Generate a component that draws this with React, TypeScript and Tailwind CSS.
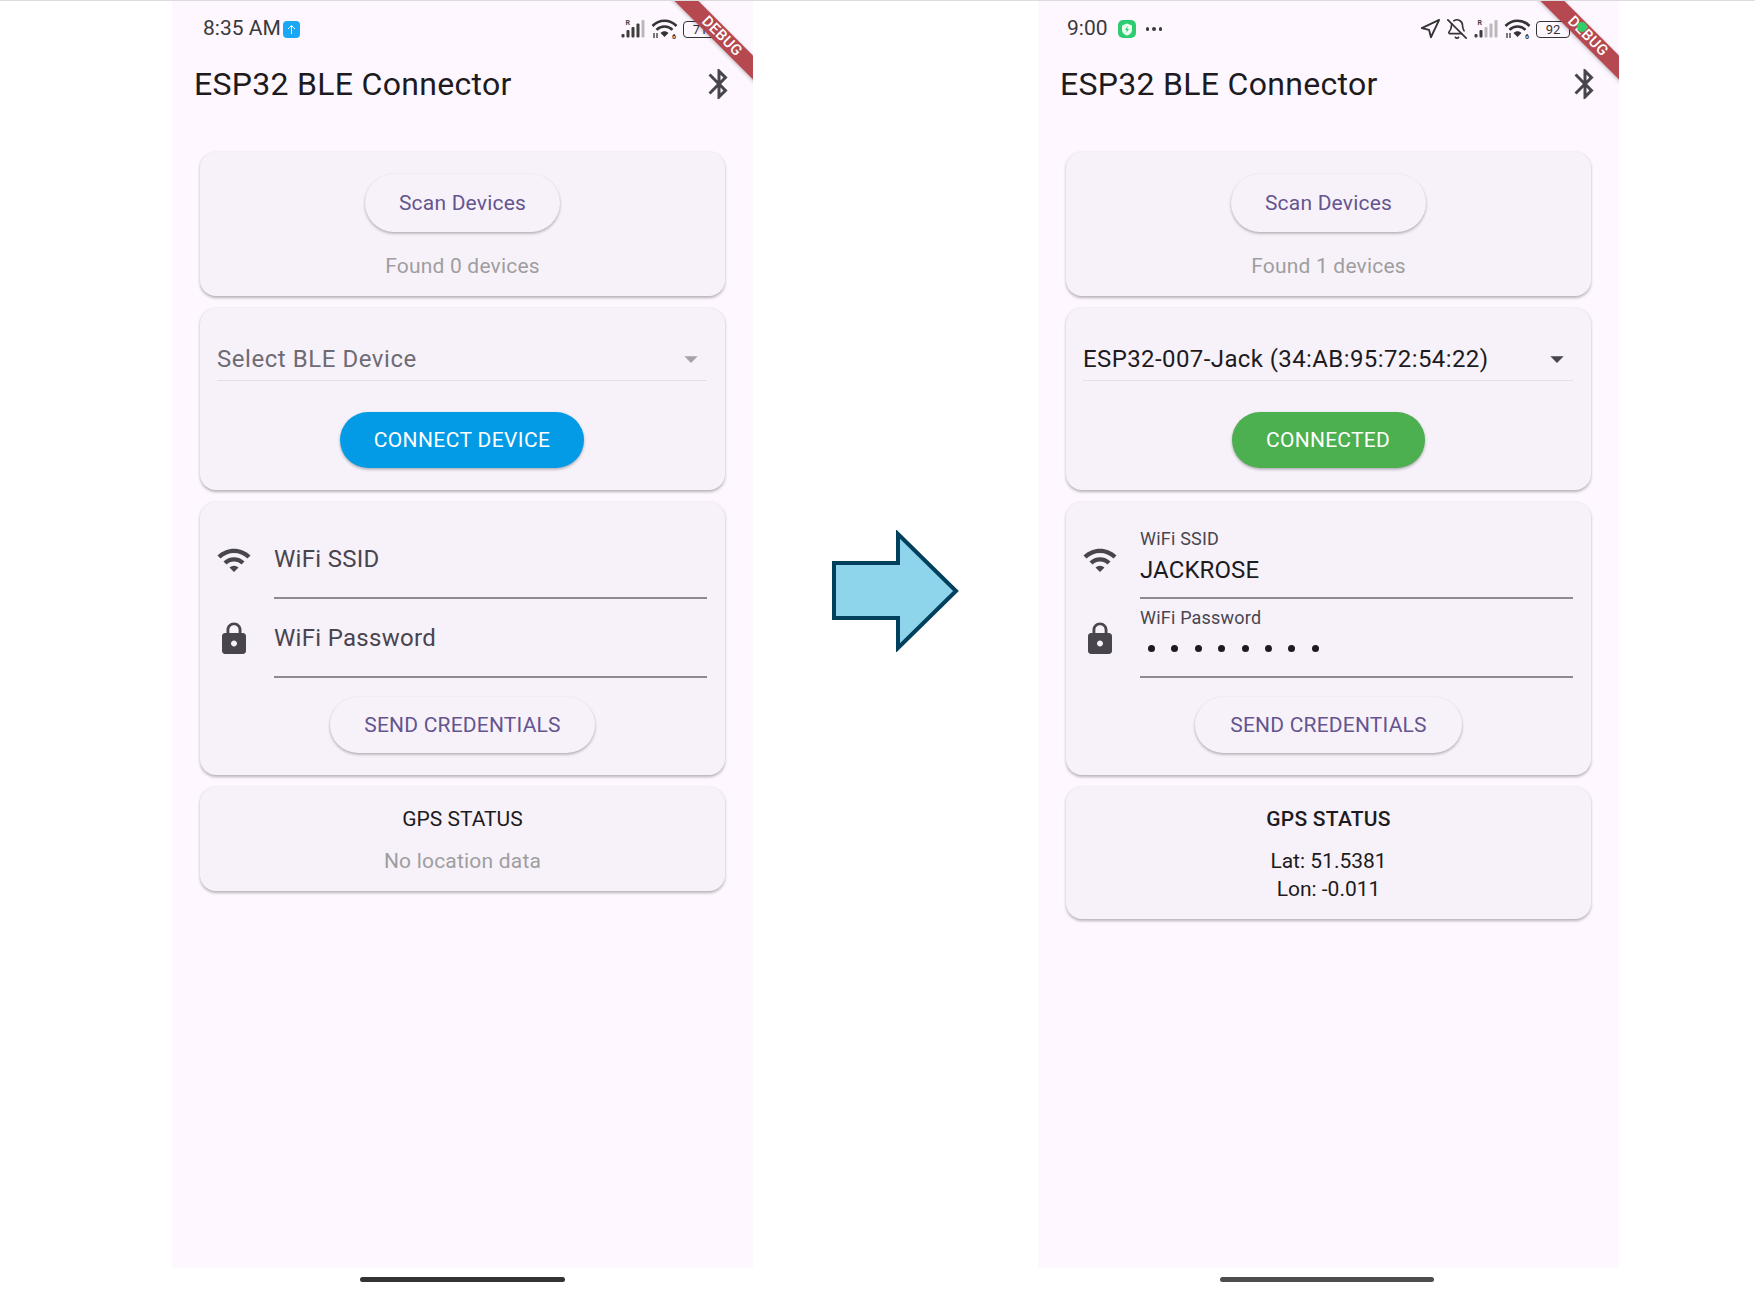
import { MdArrowDropDown, MdBluetooth, MdLock, MdWifi } from 'react-icons/md';
import { BellOff, Navigation } from 'lucide-react';

function Signal() {
  return (
    <svg width="26" height="22" viewBox="0 0 25 22">
      <text x="5" y="6.500" fontSize="7" fontWeight="700" fill="#444" fontFamily="Roboto, sans-serif">R</text>
      <rect x="1" y="16" width="3" height="3.500" rx="1" fill="#3d3d3d" />
      <rect x="6" y="12" width="3" height="7.500" rx="1" fill="#3d3d3d" />
      <rect x="11" y="9" width="3" height="10.500" rx="1" fill="#3d3d3d" />
      <rect x="16" y="5.500" width="3" height="14" rx="1" fill="#3d3d3d" />
      <rect x="21" y="2" width="3" height="17.500" rx="1" fill="#b9b9b9" />
    </svg>
  );
}

function SignalWeak() {
  return (
    <svg width="26" height="22" viewBox="0 0 25 22">
      <text x="4" y="6.500" fontSize="7" fontWeight="700" fill="#444" fontFamily="Roboto, sans-serif">R</text>
      <rect x="1" y="16" width="3" height="3.500" rx="1" fill="#3d3d3d" />
      <rect x="6" y="12" width="3" height="7.500" rx="1" fill="#3d3d3d" />
      <rect x="11" y="9" width="3" height="10.500" rx="1" fill="#b9b9b9" />
      <rect x="16" y="5.500" width="3" height="14" rx="1" fill="#b9b9b9" />
      <rect x="21" y="2" width="3" height="17.500" rx="1" fill="#b9b9b9" />
    </svg>
  );
}

function WifiStatus() {
  return (
    <svg width="27" height="22" viewBox="0 0 27 22" fill="none">
      <path d="M1.500 8 C8 1 19 1 25.500 8" stroke="#333" strokeWidth="2.600" />
      <path d="M5.500 11.800 C10 7.300 17 7.300 21.500 11.800" stroke="#333" strokeWidth="2.600" />
      <path d="M9.500 15 C12 12.800 15 12.800 17.500 15 L13.500 19 Z" fill="#333" />
      <path d="M3 15 v5 M6 20 v-5" stroke="#333" strokeWidth="1.300" />
      <text x="21" y="21" fontSize="7" fontWeight="700" fill="#333" fontFamily="Roboto, sans-serif">6</text>
    </svg>
  );
}

function Battery({ level }: { level: string }) {
  return (
    <div className="relative flex h-[17px] w-[34px] items-center justify-center rounded-[4px] border-[1.5px] border-[#333] text-[13px] leading-none text-[#333]">
      {level}
    </div>
  );
}

function Card({ className, children }: { className?: string; children: React.ReactNode }) {
  return (
    <div className={`rounded-[16px] bg-[#f7f2fa] shadow-[0_1.500px_3px_rgba(0,0,0,0.28)] ${className ?? ''}`}>
      {children}
    </div>
  );
}

function OutlineButton({ label, className }: { label: string; className: string }) {
  return (
    <div className={`flex items-center justify-center rounded-full bg-[#f7f2fa] pt-[2px] text-[21px] tracking-[0.2px] text-[#65558f] shadow-[0_1.500px_3px_rgba(0,0,0,0.3)] ${className}`}>
      {label}
    </div>
  );
}

function Field({ icon, label, value }: { icon: React.ReactNode; label: string; value?: React.ReactNode }) {
  return (
    <div className="flex h-[79px]">
      <div className="ml-[-2px] flex w-[58px] shrink-0 items-center text-[#49454f]">{icon}</div>
      <div className="flex flex-1 flex-col border-b-2 border-[#8e8a92]">
        {value ? (
          <>
            <span className="mt-[9px] text-[18px] leading-[20px] tracking-[0.2px] text-[#49454f]">{label}</span>
            {value}
          </>
        ) : (
          <span className="mt-[24px] text-[24px] leading-[30px] tracking-[0.3px] text-[#49454f]">{label}</span>
        )}
      </div>
    </div>
  );
}

type PhoneProps = {
  connected: boolean;
  barClass: string;
  status: React.ReactNode;
  icons: React.ReactNode;
};

function Phone({ connected, barClass, status, icons }: PhoneProps) {
  return (
    <div className="w-[581px] shrink-0">
      <div className="relative h-[1267px] overflow-hidden bg-[#fef7ff]">
        {/* status bar */}
        <div className="flex h-[55px] items-center justify-between pt-[1px] pl-[31px]">
          {status}
          {icons}
        </div>

        {/* app bar */}
        <div className="flex h-[56px] items-center justify-between pr-[16px] pl-[22px]">
          <span className="text-[32px] tracking-[0.3px] text-[#1d1b20]">ESP32 BLE Connector</span>
          <MdBluetooth size={36} className="text-[#49454f]" />
        </div>

        <div className="flex flex-col gap-[12px] px-[28px] pt-[40px]">
          <Card className="flex h-[144px] flex-col items-center pt-[22px]">
            <OutlineButton label="Scan Devices" className="h-[58px] w-[195px]" />
            <span className="mt-[19px] text-[21px] leading-[30px] tracking-[0.2px] text-[#9e9e9e]">
              {connected ? 'Found 1 devices' : 'Found 0 devices'}
            </span>
          </Card>

          <Card className="flex h-[182px] flex-col items-center pr-[18px] pl-[17px]">
            <div className="flex h-[73px] w-full items-end border-b border-[#e3dfe6] pb-[2px]">
              <div className="flex h-[38px] w-full items-center justify-between">
                <span className={connected ? 'text-[24px] tracking-[0.4px] text-[#1d1b20]' : 'text-[24px] tracking-[0.55px] text-[#6f6b73]'}>
                  {connected ? 'ESP32-007-Jack (34:AB:95:72:54:22)' : 'Select BLE Device'}
                </span>
                <MdArrowDropDown size={32} className={connected ? 'text-[#49454f]' : 'text-[#a5a2a8]'} />
              </div>
            </div>
            <div
              className={
                connected
                  ? 'mt-[31px] flex h-[56px] w-[193px] items-center justify-center rounded-full bg-[#4caf50] pt-[1px] text-[21px] tracking-[0.25px] text-white shadow-[0_1.500px_3px_rgba(0,0,0,0.3)]'
                  : 'mt-[31px] flex h-[56px] w-[244px] items-center justify-center rounded-full bg-[#039be5] pt-[1px] text-[21px] tracking-[0.4px] text-white shadow-[0_1.500px_3px_rgba(0,0,0,0.3)]'
              }
            >
              {connected ? 'CONNECTED' : 'CONNECT DEVICE'}
            </div>
          </Card>

          <Card className="flex h-[273px] flex-col px-[18px] pt-[18px]">
            <Field
              icon={<MdWifi size={36} />}
              label="WiFi SSID"
              value={connected ? <span className="mt-[5px] text-[24px] leading-[32px] tracking-[0.1px] text-[#1d1b20]">JACKROSE</span> : undefined}
            />
            <Field
              icon={<MdLock size={36} />}
              label="WiFi Password"
              value={
                connected ? (
                  <div className="mt-[17px] flex gap-[16.400px] pl-[8px]">
                    {[0, 1, 2, 3, 4, 5, 6, 7].map((i) => (
                      <span key={i} className="size-[7px] rounded-full bg-[#1d1b20]" />
                    ))}
                  </div>
                ) : undefined
              }
            />
            <div className="mt-[19px] flex justify-center">
              <OutlineButton label="SEND CREDENTIALS" className={connected ? 'h-[56px] w-[267px]' : 'h-[56px] w-[265px]'} />
            </div>
          </Card>

          <Card className={connected ? 'flex h-[132px] flex-col items-center pt-[17px]' : 'flex h-[104px] flex-col items-center pt-[17px]'}>
            <span className={connected ? 'text-[21px] leading-[30px] font-medium tracking-[0.25px] text-[#1d1b20]' : 'text-[21px] leading-[30px] text-[#1d1b20]'}>
              GPS STATUS
            </span>
            {connected ? (
              <div className="mt-[13px] flex flex-col items-center text-[21px] leading-[28px] text-[#1d1b20]">
                <span>Lat: 51.5381</span>
                <span>Lon: -0.011</span>
              </div>
            ) : (
              <span className="mt-[12px] text-[21px] leading-[30px] tracking-[0.2px] text-[#9e9e9e]">No location data</span>
            )}
          </Card>
        </div>

        {/* debug banner */}
        <div className="absolute top-[25px] right-[-37px] flex h-[17px] w-[140px] rotate-45 items-center justify-center bg-[#b13f46]/95 pl-[5px] text-[15px] font-medium tracking-wide text-white shadow-[0_1px_4px_rgba(0,0,0,0.25)]">
          DEBUG
        </div>
        {connected && <div className="absolute top-[21px] right-[32px] size-[10px] rounded-full bg-[#2fd06a]" />}
      </div>

      <div className={`mx-auto mt-[9px] h-[5px] rounded-full ${barClass}`} />
    </div>
  );
}

export default function App() {
  return (
    <div
      className="flex h-[1290px] overflow-hidden border-t border-[#dcdcdc] bg-white pl-[172px]"
      style={{ fontFamily: 'Roboto, "Noto Sans", sans-serif' }}
    >
      <Phone
        connected={false}
        barClass="w-[205px] bg-[#333333]"
        status={
          <div className="flex items-center gap-[2px] text-[21px] text-[#3a3a3a]">
            <span>8:35 AM</span>
            <div className="flex size-[17px] items-center justify-center rounded-[4px] bg-[#1aa7f5]">
              <svg width="11" height="11" viewBox="0 0 11 11" fill="none" stroke="#fff" strokeWidth="1">
                <path d="M5.500 10V1.500M2 5l3.500-3.500L9 5" />
              </svg>
            </div>
          </div>
        }
        icons={
          <div className="flex items-center gap-[5px] pr-[36px]">
            <Signal />
            <WifiStatus />
            <Battery level="71" />
          </div>
        }
      />

      <div className="flex flex-1 justify-center pt-[529px] pl-[1px]">
        <svg width="128" height="122" viewBox="0 0 128 122" className="shrink-0">
          <path d="M2 33 H66 V4 L124 61 L66 118 V88 H2 Z" fill="#8ed5ec" stroke="#00405c" strokeWidth="4" strokeLinejoin="miter" />
        </svg>
      </div>

      <div className="mr-[136px]">
        <Phone
          connected
          barClass="w-[214px] -translate-x-[2px] bg-[#4d4d4d]"
          status={
            <div className="-ml-[2px] flex items-center gap-[10px] text-[21px] text-[#3a3a3a]">
              <span>9:00</span>
              <div className="flex size-[18px] items-center justify-center rounded-[5px] bg-[#2ecc71]">
                <svg width="12" height="13" viewBox="0 0 12 13">
                  <path d="M6 .5 11 2.500V7c0 3-2.500 4.600-5 5.500C3.500 11.600 1 10 1 7V2.500Z" fill="#eafff2" />
                  <path d="M6.800 3 4 7h1.800l-.6 3L8 6H6.200Z" fill="#2ecc71" />
                </svg>
              </div>
              <div className="flex gap-[3px]">
                <span className="size-[3.500px] rounded-full bg-[#3a3a3a]" />
                <span className="size-[3.500px] rounded-full bg-[#3a3a3a]" />
                <span className="size-[3.500px] rounded-full bg-[#3a3a3a]" />
              </div>
            </div>
          }
          icons={
            <div className="flex items-center gap-[5px] pr-[49px]">
              <Navigation size={22} strokeWidth={2} className="text-[#333]" />
              <BellOff size={22} strokeWidth={1.800} className="text-[#333]" />
              <SignalWeak />
              <WifiStatus />
              <Battery level="92" />
            </div>
          }
        />
      </div>
    </div>
  );
}
